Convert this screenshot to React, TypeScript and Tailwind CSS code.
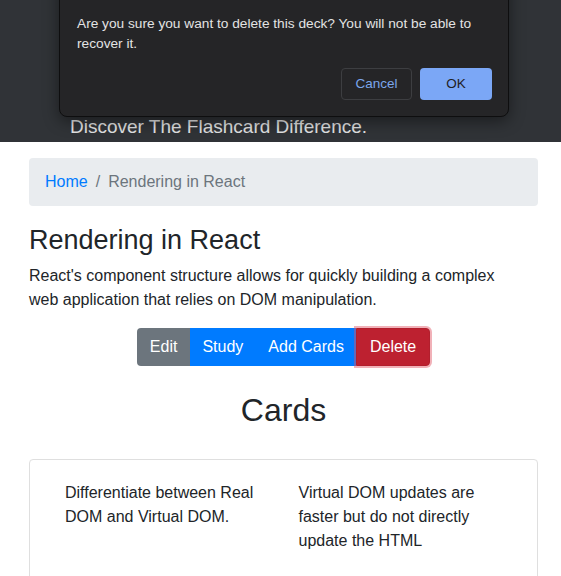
export default function App() {
  return (
    <div className="w-full min-h-[576px] bg-white font-['Liberation_Sans',Arial,sans-serif] text-[#212529] overflow-hidden">
      {/* dimmed jumbotron band with dialog */}
      <div className="relative h-[142px] bg-[#303337]">
        <div className="flex h-full items-end pl-[70px] pb-0">
          <p className="text-[19px] leading-[30px] text-[#e2e3e4]">Discover The Flashcard Difference.</p>
        </div>
        <div className="absolute left-[59px] top-[-37px] w-[450px] rounded-[8px] border border-[#0e0e0f] bg-[#252527] px-4 pb-4 pt-[50px] shadow-[0_4px_16px_rgba(0,0,0,0.45)]">
          <p className="text-[13.7px] leading-[20px] text-[#e3e3e3] pl-px">
            Are you sure you want to delete this deck? You will not be able to recover it.
          </p>
          <div className="mt-[14px] flex justify-end gap-2">
            <button className="h-8 w-[71px] rounded-[4px] border border-[#3d3e41] text-[13.5px] font-normal text-[#7ba6ec]">Cancel</button>
            <button className="h-8 w-[72px] rounded-[4px] bg-[#7ba7f6] text-[13.5px] font-normal text-[#1f2023]">OK</button>
          </div>
        </div>
      </div>

      <div className="pl-[29px] pr-[23px] pt-4">
        <nav className="flex items-center rounded-[4px] bg-[#e9ecef] px-4 py-3 text-[16px] leading-6">
          <a className="text-[#007bff]">Home</a>
          <span className="px-2 text-[#6c757d]">/</span>
          <span className="text-[#6c757d]">Rendering in React</span>
        </nav>

        <h3 className="mt-[18px] text-[27px] font-medium leading-[1.2] mb-2">Rendering in React</h3>
        <p className="max-w-[482px] text-[16px] leading-6 mb-4">
          React's component structure allows for quickly building a complex web application that relies on DOM manipulation.
        </p>

        <div className="flex justify-center">
          <div className="flex text-[16px] leading-6 text-white">
            <button className="rounded-l-[4px] bg-[#6c757d] px-[12.5px] py-[7px]">Edit</button>
            <button className="bg-[#007bff] px-[12.5px] py-[7px]">Study</button>
            <button className="bg-[#007bff] px-[12.5px] py-[7px]">Add Cards</button>
            <button className="rounded-r-[4px] border border-[#b21f2d] bg-[#bd2130] px-[12.5px] py-[6px] shadow-[0_0_0_2px_rgba(225,83,97,0.45)]">Delete</button>
          </div>
        </div>

        <h2 className="mt-[25px] text-center text-[32px] font-medium leading-[1.2]">Cards</h2>

        <div className="mt-[29px] h-[140px] rounded-[4px] border border-[#dfdfdf] px-5 pt-[21px]">
          <div className="grid grid-cols-2 text-[16px] leading-6">
            <div className="px-[15px]">Differentiate between Real DOM and Virtual DOM.</div>
            <div className="px-[15px]">Virtual DOM updates are faster but do not directly update the HTML</div>
          </div>
        </div>
      </div>
    </div>
  );
}
